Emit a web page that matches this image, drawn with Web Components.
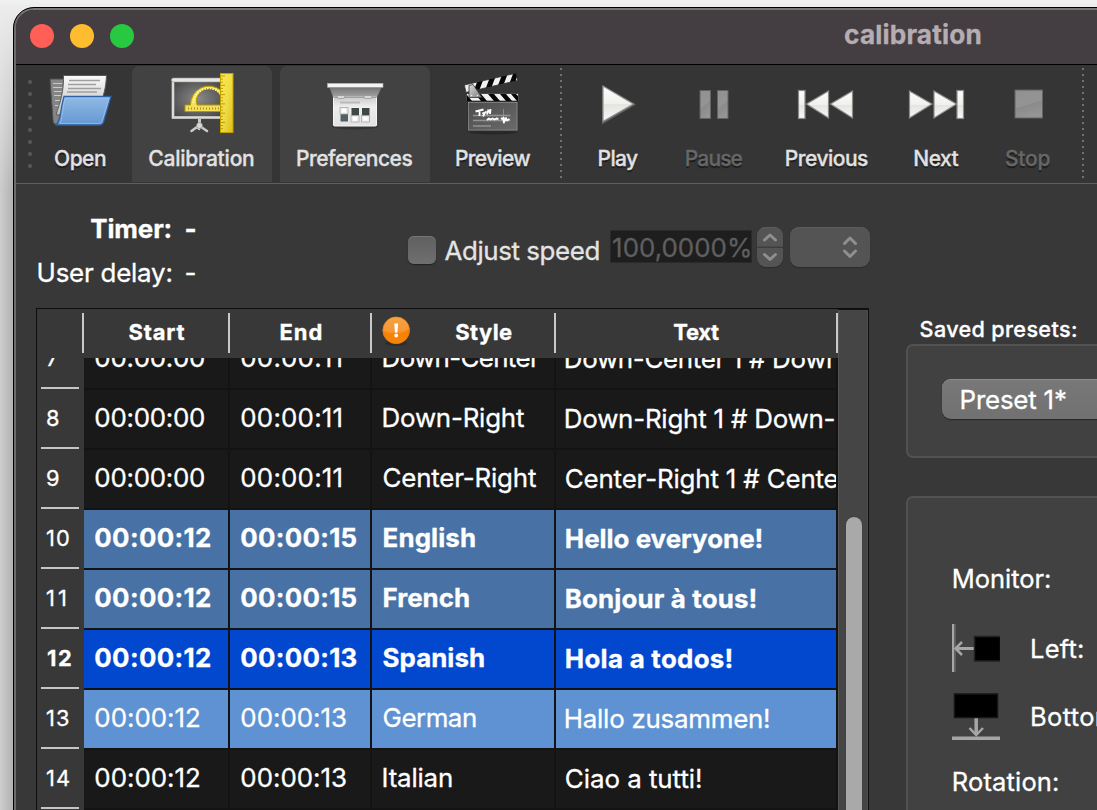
<!DOCTYPE html>
<html lang="en">
<head>
<meta charset="utf-8">
<title>calibration</title>
<style>
html,body{margin:0;height:810px;width:1097px;overflow:hidden;background:#ccc}
body{font-family:Inter,"Liberation Sans",sans-serif;color:#fff}
</style>
</head>
<body>
<app-desktop>
  <app-window heading="calibration">
    <tool-bar slot="toolbar"></tool-bar>
    <main-pane slot="main"></main-pane>
    <preset-pane slot="side"></preset-pane>
  </app-window>
</app-desktop>
<script>
const define = (name, render) => customElements.define(name, class extends HTMLElement {
  connectedCallback() {
    if (this.shadowRoot) return;
    this.attachShadow({mode: 'open'}).innerHTML = render(this);
  }
});

/* Single line of text: b = baseline offset, w = inked width, s = font size, wt = weight, x = left offset */
const ctx = document.createElement('canvas').getContext('2d');
define('ui-label', el => {
  const g = (n, d) => parseFloat(el.getAttribute(n) ?? d);
  const s = g('s', 25.9), wt = g('wt', 400), b = g('b', 20), w = g('w', 0), x = g('x', 0);
  const t = el.textContent;
  ctx.font = `${wt} ${s}px Inter, "Liberation Sans", sans-serif`;
  const m = ctx.measureText(t);
  const ink = m.actualBoundingBoxRight + m.actualBoundingBoxLeft;
  const ls = w && t.length > 1 ? (w - 0.7 - ink) / (t.length - 1) : 0;
  const off = x + 0.6 + m.actualBoundingBoxLeft;
  return `<style>:host{display:block;line-height:0;white-space:pre;font-size:${s}px;font-weight:${wt};height:${b}px;-webkit-text-stroke:.3px currentColor}
  i{display:inline-block;width:0;height:${b}px}
  span{letter-spacing:${ls.toFixed(3)}px;margin-left:${off.toFixed(2)}px}</style><i></i><span><slot></slot></span>`;
});

define('app-desktop', () => `<style>
:host{display:flex;width:1097px;height:810px;box-sizing:border-box;padding:7px 0 0 13px;overflow:hidden;
background:linear-gradient(180deg,#f1f1f1 0,#ececec 7px,rgba(236,236,236,0) 190px),linear-gradient(90deg,#cdcdcd 0,#b2b2b2 13px)}
</style><slot></slot>`);

define('app-window', el => `<style>
:host{display:flex;flex:none;width:1120px;height:830px;box-sizing:border-box;border:1px solid #000;border-radius:21px 0 0 0;background:#383838;overflow:hidden}
.in{flex:1;border:2px solid #6c6c6c;border-top-color:#777;border-radius:20px 0 0 0;overflow:hidden;display:flex;flex-direction:column}
header{height:54px;flex:none;background:#443d41;border-bottom:1px solid #000;display:flex;color:#b6adb2}
.l{width:24px;height:24px;border-radius:50%;margin:14px 16px 0 0}
.l:first-child{margin-left:14px}
section{display:flex;flex:1}
</style><div class="in"><header><div class="l" style="background:#ff5f57"></div><div class="l" style="background:#febc2e"></div><div class="l" style="background:#28c840"></div>
<ui-label x="694.500" w="136" b="34" s="26.200" wt="700">${el.getAttribute('heading')}</ui-label></header>
<slot name="toolbar"></slot><section><slot name="main"></slot><slot name="side"></slot></section></div>`);

define('tool-button', el => {
  const a = n => el.getAttribute(n);
  return `<style>:host{display:block;flex:none;height:116px;margin-top:1px;color:#e2e2e2;text-shadow:0 2px 1px #1b1b1b}
  :host([checked]){background:#424242;border-radius:7px 7px 0 0;text-shadow:none}
  :host([disabled]){color:#676767}
  .ic{display:flex;justify-content:center;height:64px;padding-top:6px}</style>
  <div class="ic"><slot></slot></div><ui-label x="${a('lx')}" w="${a('lw')}" b="30" s="21" wt="500">${a('label')}</ui-label>`;
});

const OPEN = `
<path d="M50 79H64L63 124H55Q53 124 53 120Z" fill="#858585" stroke="#4f4f4f"/>
<path d="M53 83.500h9M53 87.500h9M54 91.500h8M54 95.500h8M55 100.500h7M55 105.500h7" stroke="#c9c9c9"/>
<path d="M64 75.500H106.500C106 86 104 98 99 104H65L60 115H56.500C56 111 64 98 63.500 75.500Z" fill="url(#pp)" stroke="#595959"/>
<path d="M69 80.500h31M68 84.500h28M68 88.500h33M67 92h30" stroke="#a0a0a0" stroke-width="1.300"/>
<path d="M64 96.500H111L103.500 122Q102.500 125 99 125H55.500C61 122 60 110 64 96.500Z" fill="url(#bl)" stroke="#2d62a6" stroke-width="1.300"/>
<path d="M65.500 98H109L102 121.500Q101.500 123.500 99 123.500H60C63 117 62 108 65.500 98Z" fill="none" stroke="#aaccf0" stroke-opacity=".55"/>`;
const teeth = Array.from({length: 18}, (_, i) => `M221 ${76 + i * 3.1}h${i % 3 ? 2 : 4}`).join('');
const CALIB = `
<rect x="173" y="80" width="50" height="37.500" fill="url(#scr)" stroke="#dadbd7" stroke-width="2.600"/>
<rect x="171.500" y="78" width="52" height="4" rx="2" fill="#e6e7e3" stroke="#93948f" stroke-width=".6"/>
<path d="M199.500 119V127" stroke="#c9cac6" stroke-width="3"/><path d="M199 125.500L191.500 131M199 125.500L207 131M199 125.500V129" stroke="#c9cac6" stroke-width="2.600" stroke-linecap="round"/>
<circle cx="199.500" cy="125.500" r="3" fill="#d7d8d4" stroke="#777" stroke-width=".5"/>
<path d="M185 105H190.500A18.500 18.500 0 0 1 221 90.500V97A11 11 0 0 0 197 105H221V111.500H185Z" fill="#f3df58" stroke="#b79600"/>
<path d="M193.500 103A15.500 15.500 0 0 1 221 94" fill="none" stroke="#fff8b0" stroke-width="2" stroke-dasharray="1.500 1.200"/>
<path d="M188 108.500H220" stroke="#a98f1a" stroke-width="2" stroke-dasharray="1 2"/>
<rect x="220.500" y="73.500" width="12.500" height="59" fill="url(#yl)" stroke="#c2a000"/>
<path d="${teeth}" stroke="#a78a00" stroke-width=".8"/>`;
const PREF = `
<ellipse cx="355" cy="126.500" rx="23" ry="3" fill="#2b2b2b" opacity=".6"/>
<path d="M330 88H381L376.500 98H333.500Z" fill="url(#hd)" stroke="#7a7a7a" stroke-width=".6"/>
<rect x="333.500" y="96.500" width="43" height="29.500" rx="1" fill="url(#wb)" stroke="#f6f6f6"/>
<path d="M333.500 97H376.500" stroke="#777"/>
<rect x="337" y="95.500" width="8" height="3" rx="1.500" fill="#d8d8d8" stroke="#888" stroke-width=".6"/><rect x="364" y="95.500" width="8" height="3" rx="1.500" fill="#d8d8d8" stroke="#888" stroke-width=".6"/>
<rect x="327.500" y="83.300" width="55.500" height="4" fill="#f5f5f5" stroke="#aaa" stroke-width=".6"/>
<path d="M340 102.600H360" stroke="#b9b9b9" stroke-width="2"/>
<g fill="#526066"><rect x="340.500" y="108" width="7.500" height="13.500"/></g><g fill="#3f4845"><rect x="351.500" y="108" width="7.500" height="13.500"/><rect x="362" y="108" width="7.500" height="13.500"/></g>
<g fill="#eee" stroke="#aaa" stroke-width=".8"><rect x="340" y="107.500" width="8" height="6.500"/><rect x="351" y="115.500" width="8" height="6.500"/><rect x="361.500" y="115.500" width="8" height="6.500"/></g>
<g fill="#fff"><rect x="342" y="109" width="4" height="3.500"/><rect x="353" y="117" width="4" height="3.500"/><rect x="363.500" y="117" width="4" height="3.500"/></g>`;
const CLAP = `
<ellipse cx="493" cy="132" rx="24" ry="2.500" fill="#222" opacity=".7"/>
<g transform="rotate(-13 465 88)"><rect x="465" y="85" width="53" height="7.500" fill="#f1f1ef" stroke="#2a2a2a" stroke-width=".7"/>
<path d="M473 92.500l5-7.500h6l-5 7.500zM485.500 92.500l5-7.500h6l-5 7.500zM498 92.500l5-7.500h6l-5 7.500zM510 92.500l5-7.500h3v4l-2 3.500z" fill="#080808"/></g>
<rect x="467.500" y="101.500" width="50.500" height="29.500" fill="url(#bd)" stroke="#2e2e2e"/><rect x="468.500" y="102.500" width="48.500" height="27.500" fill="none" stroke="#8d8d8d" stroke-width=".7"/>
<rect x="466.500" y="93.500" width="52" height="7.500" fill="#f1f1ef" stroke="#2a2a2a" stroke-width=".7"/>
<path d="M472 101l-5-6v6zM475 94h6l6 7h-6zM488 94h6l6 7h-6zM500 94h6l6 7h-6zM511 94h5l2 2v5h-1z" fill="#080808"/>
<path d="M469 85.500L473 84.500L482 97.500H469Z" fill="url(#hg)" stroke="#333" stroke-width=".8"/>
<circle cx="471.500" cy="95.500" r=".8" fill="#eee"/><circle cx="477.500" cy="95.500" r=".8" fill="#eee"/>
<path d="M473 115.500H510.500M473 120.500H510.500M473 126H491" stroke="#929292" stroke-width="1.300"/>
<path d="M475.500 111.500l8-2M479.500 110.500v5.500M482.500 112.500l1.500 1.500 2-2.500M484.500 113.500l-1.500 3M488.500 109.500l-1.500 5M486.500 112l3-.5M490.500 109l-.5 5M487 120l2-1.500 1.500 1 2-1 2 1 2-1 2 .5M501 118l2 1.500 .5-2 .3 5 2.200-4.500 1 2.500 2.500-1.500" fill="none" stroke="#fff" stroke-width="1.900" stroke-linejoin="round"/>
<path d="M503.500 109v8" stroke="#999" stroke-width=".7"/>`;
const W = 'fill="url(#wh)" stroke="#8b8b88" stroke-width="1.200"';
const G = 'fill="url(#gy)" stroke="#636363"';
const defs = `<defs>
<linearGradient id="pp" x2="0" y2="1"><stop stop-color="#fafafa"/><stop offset="1" stop-color="#bdbdbd"/></linearGradient>
<linearGradient id="bl" x2="0" y2="1"><stop stop-color="#91b9e6"/><stop offset="1" stop-color="#6698d1"/></linearGradient>
<radialGradient id="scr" r=".75"><stop stop-color="#8a8a8a"/><stop offset="1" stop-color="#3a3a3a"/></radialGradient>
<linearGradient id="yl" x2="1" y2="1"><stop stop-color="#ffe84a"/><stop offset=".5" stop-color="#f0dc48"/><stop offset="1" stop-color="#dcbf16"/></linearGradient>
<linearGradient id="hd" x2="0" y2="1"><stop stop-color="#777"/><stop offset="1" stop-color="#a8a8a8"/></linearGradient>
<linearGradient id="wb" x2="0" y2="1"><stop stop-color="#c9c9c9"/><stop offset=".35" stop-color="#eee"/><stop offset="1" stop-color="#e2e2e2"/></linearGradient>
<linearGradient id="bd" x2="1" y2="1"><stop stop-color="#4b4b4b"/><stop offset="1" stop-color="#6b6b6b"/></linearGradient>
<linearGradient id="hg" x2="1" y2="1"><stop stop-color="#ddd"/><stop offset="1" stop-color="#777"/></linearGradient>
<linearGradient id="wh" x2="0" y2="1"><stop stop-color="#fdfdfc"/><stop offset=".5" stop-color="#f0f0ee"/><stop offset=".52" stop-color="#e4e4e1"/><stop offset="1" stop-color="#f8f8f6"/></linearGradient>
<linearGradient id="gy" x2=".3" y2="1"><stop stop-color="#919191"/><stop offset=".6" stop-color="#949494"/><stop offset=".62" stop-color="#8a8a8a"/><stop offset="1" stop-color="#959595"/></linearGradient></defs>`;
/* [label, gap before, width, icon centre, label offset, label width, state, drawing] */
const TOOLS = [
 ['Open',0,72,80,10.500,51.500,'',OPEN],
 ['Calibration',16,140,202,16.700,105.500,'checked',CALIB],
 ['Preferences',8,150,355,16.500,116,'checked',PREF],
 ['Preview',8,108,492,17.300,75,'',CLAP],
 0,
 ['Play',19,72,617,17,40,'',`<path d="M602 85.500L636 104.500L602 124.500Z" fill="#5c5c5c"/><path d="M603 86L633.500 104L603 121.500Z" ${W}/>`],
 ['Pause',24,72,713,8.200,57.500,'disabled',`<rect x="700" y="90.500" width="10.500" height="28" ${G}/><rect x="717.500" y="90.500" width="10.500" height="28" ${G}/>`],
 ['Previous',27,100,826,9.200,83,'',`<rect x="798.500" y="90.500" width="6.500" height="28" ${W}/><path d="M828.500 91V118L806.500 104ZM852.500 91V118L830.500 104Z" ${W}/>`],
 ['Next',24,72,936,13.700,45,'',`<path d="M909.500 91V118L932 104ZM934 91V118L956.500 104Z" ${W}/><rect x="957" y="90.500" width="6.500" height="28" ${W}/>`],
 ['Stop',20,72,1028,13.500,44,'disabled',`<rect x="1015" y="90" width="27.500" height="28" ${G}/>`],
 1];
define('tool-bar', () => `<style>
:host{display:flex;flex:none;height:118px;background:#353535;border-bottom:1px solid #606060}
.grip{width:28px;flex:none;height:96px;margin-top:10px;background:radial-gradient(circle at 14px 7px,#555 1.700px,transparent 2.300px) 0 0/28px 12px}
.sep{flex:none;width:2px;height:112px;margin:3px 0 0 14px;background:repeating-linear-gradient(#707070 0 2px,transparent 2px 6px)}
.sep.e{margin-left:18px}
svg{display:block;overflow:visible}
</style><div class="grip"></div>` + TOOLS.map(t => Array.isArray(t)
 ? `<tool-button style="width:${t[2]}px;margin-left:${t[1]}px" label="${t[0]}" lx="${t[4]}" lw="${t[5]}" ${t[6]}><svg width="64" height="64" viewBox="${t[3]-32} 72 64 64" fill="none">${defs}${t[7]}</svg></tool-button>`
 : `<div class="sep ${t ? 'e' : ''}"></div>`).join(''));

define('speed-controls', () => `<style>
:host{display:flex;align-items:flex-start}
.cb{width:28px;height:28px;margin-top:52px;border-radius:6px;background:linear-gradient(#606060,#6f6f6f);box-shadow:0 1px 1px #222,inset 0 1px 0 #777}
.f{width:140px;height:31px;border:1px solid #2a2a2a;background:#1e1e1e;margin:46px 0 0 10px;color:#5f5f5f}
.st,.co{height:40px;margin-top:43px;border-radius:9px;background:#545454;box-shadow:0 1px 1px #2b2b2b,inset 0 1px 0 #5c5c5c}
.st{width:26px;margin-left:5px}.co{width:80px;margin-left:7px}svg{display:block}
</style><div class="cb"></div><div style="width:164px;color:#e4e4e4"><ui-label x="8" w="154.500" b="75.500">Adjust speed</ui-label></div>
<div class="f"><ui-label x="1.500" w="137.500" b="26">100,0000%</ui-label></div>
<div class="st"><svg width="26" height="40" fill="none" stroke="#8f8f8f" stroke-width="3" stroke-linecap="round" stroke-linejoin="round"><path d="M0 20.200H26" stroke="#3e3e3e" stroke-width="1.500"/><path d="M7.500 13L13 8L18.500 13M7.500 27.500L13 32.500L18.500 27.500"/></svg></div>
<div class="co"><svg width="80" height="40" fill="none" stroke="#8f8f8f" stroke-width="3" stroke-linecap="round" stroke-linejoin="round"><path d="M54.500 16.500L60 11L65.500 16.500M54.500 24L60 29.500L65.500 24"/></svg></div>`);

define('main-pane', () => `<style>
:host{display:block;flex:none;width:853px;margin-left:20px}
.top{display:flex;height:124px}.info{width:372px}
.r{display:flex}.r>:first-child{width:149px}
</style><div class="top"><div class="info">
<div class="r"><ui-label x="53.700" w="81" b="54" wt="700">Timer:</ui-label><ui-label w="10" b="54" wt="700">-</ui-label></div>
<div class="r"><ui-label x="2" w="133.500" b="43.700">User delay:</ui-label><ui-label w="10" b="43.700">-</ui-label></div>
</div><speed-controls></speed-controls></div><subtitle-table></subtitle-table>`);

/* number, number width, class, then text/width pairs */
const ROWS = [
 ['7',12,'','00:00:00',109.500,'00:00:11',101,'Down-Center',157,'Down-Center 1 # Down',275],
 ['8',12,'','00:00:00',109.500,'00:00:11',101,'Down-Right',141,'Down-Right 1 # Down-',269.500],
 ['9',12,'','00:00:00',109.500,'00:00:11',101,'Center-Right',153,'Center-Right 1 # Cente',272.500],
 ['10',22.500,'m','00:00:12',115.500,'00:00:15',116,'English',92,'Hello everyone!',196.500],
 ['11',18.500,'m','00:00:12',115.500,'00:00:15',116,'French',86,'Bonjour à tous!',190.500],
 ['12',24.500,'s','00:00:12',115.500,'00:00:13',116,'Spanish',101,'Hola a todos!',166.500],
 ['13',22.500,'h','00:00:12',104.500,'00:00:13',105.500,'German',93,'Hallo zusammen!',204],
 ['14',22.500,'','00:00:12',104.500,'00:00:13',105.500,'Italian',69,'Ciao a tutti!',136]];
define('table-row', el => {
  const r = ROWS[el.getAttribute('i')], bold = r[2] === 'm' || r[2] === 's' ? 700 : 400;
  const c = (k, x, b) => `<div><ui-label x="${x}" w="${r[k+1]}" b="${b}" wt="${bold}">${r[k]}</ui-label></div>`;
  return `<style>:host{display:grid;grid-template-columns:45px 144px 140px 182px 280px;column-gap:2px;height:60px;flex:none}
  div{height:58px;margin-bottom:2px;overflow:hidden;background:#191919}
  .n{height:60px;margin:0 -2px 0 0;box-sizing:border-box;position:relative;background:#383838}
  .n::after{content:"";position:absolute;left:4px;width:38px;height:2px;bottom:1px;background:#c6c6c6}
  .m div:not(.n){background:#4872a6}
  section{display:contents}
  .s div:not(.n){background:#0148cf}.h div:not(.n){background:#5e92d3}</style>
  <section class="${r[2]}"><div class="n"><ui-label x="9.500" w="${r[1]}" b="36" s="21.800" wt="${r[2] === 's' ? 700 : 400}">${r[0]}</ui-label></div>${c(3,10.700,37)}${c(5,10.700,37)}${c(7,11,37)}${c(9,9.200,38)}</section>`;
});
define('subtitle-table', () => `<style>
:host{display:flex;width:831px;height:510px;border:1px solid #0d0d0d;background:#131313;overflow:hidden}
.t{width:801px;display:flex;flex-direction:column}
.h{display:grid;grid-template-columns:45px 146px 142px 184px 282px 2px;height:49px;flex:none;background:#383838}
.h div{border-left:2px solid #c8c8c8;height:40px;margin-top:4px;display:flex}
.h div:first-child{border:0}
.b{flex:1;overflow:hidden;display:flex;flex-direction:column}
.b table-row:first-child{margin-top:-28px}
.sb{width:28px;border-left:1px solid #555;border-right:1px solid #4e4e4e;background:#454545;margin-top:1px;display:flex}
.sb div{width:16px;height:500px;border-radius:8px 8px 0 0;background:#a9a9a9;margin:207px 0 0 7px;box-shadow:0 0 1px #222}
</style><div class="t"><div class="h"><div></div>
<div><ui-label x="44" w="56.500" b="27" s="22" wt="700">Start</ui-label></div>
<div><ui-label x="50" w="41.500" b="27" s="22" wt="700">End</ui-label></div>
<div><svg width="32" height="34" style="margin:2px 0 0 9px;flex:none"><defs><linearGradient id="o" x2="0" y2="1"><stop stop-color="#f6a240"/><stop offset="1" stop-color="#f79434"/></linearGradient></defs><ellipse cx="15" cy="28" rx="11" ry="3" fill="#222" opacity=".5"/><circle cx="15.200" cy="15.300" r="13.300" fill="#f78306" stroke="#e07f16"/><path d="M2.500 16A12.700 12.700 0 0 1 28 14Q22 18 15 18Q8 18.500 2.500 16Z" fill="url(#o)"/><path d="M13.200 8.500h4l-.8 9h-2.400z" fill="#fff"/><circle cx="15.200" cy="20.500" r="1.900" fill="#fff"/></svg><ui-label x="41.700" w="57.500" b="27" s="22" wt="700">Style</ui-label></div>
<div><ui-label x="116.700" w="46.500" b="27" s="22" wt="700">Text</ui-label></div><div></div></div>
<div class="b">${ROWS.map((_, i) => `<table-row i="${i}"></table-row>`).join('')}</div></div><div class="sb"><div></div></div>`);

define('group-box', () => `<style>:host{display:block;box-sizing:border-box;border:2px solid #525252;border-radius:7px;background:#414141;overflow:hidden}</style><slot></slot>`);
define('preset-pane', () => `<style>
:host{display:block;flex:none;width:230px;margin-left:17px}
.btn{margin:33px 0 0 34px;width:240px;height:40px;border-radius:9px;background:linear-gradient(#787878,#717171);box-shadow:0 1px 1px #262626,inset 0 1px 0 #8d8d8d}
.row{display:flex}svg{flex:none}
</style>
<ui-label x="14" w="156" b="152.500" s="21.600" wt="500">Saved presets:</ui-label>
<group-box style="height:114px;margin-top:7.500px"><div class="btn"><ui-label x="19" w="105" b="29.500">Preset 1*</ui-label></div></group-box>
<group-box style="height:340px;margin-top:38px">
<ui-label x="45.200" w="97" b="89.500" s="25.500">Monitor:</ui-label>
<div class="row" style="margin-top:36.500px;height:48px"><svg width="48" height="48" style="margin-left:44px"><rect width="2.300" height="48" fill="#a6a6a6"/><rect x="2.300" width="1.500" height="48" fill="#666"/><path d="M3 24.500H22" stroke="#a6a6a6" stroke-width="3"/><path d="M10 18L3.500 24.500L10 31" fill="none" stroke="#a6a6a6" stroke-width="2.500"/><rect x="22.500" y="12.500" width="26" height="24.500" fill="#000" stroke="#222" stroke-width="1.500"/></svg><ui-label x="31.500" w="51.500" b="34" s="25.500">Left:</ui-label></div>
<div class="row" style="margin-top:20px;height:48px"><svg width="48" height="48" style="margin-left:44px"><path d="M24.200 25V43" stroke="#a6a6a6" stroke-width="3.500"/><path d="M17.500 36L24.200 43L31 36" fill="none" stroke="#a6a6a6" stroke-width="2.500"/><rect y="44.500" width="48" height="3.500" fill="#a6a6a6"/><rect x="2.500" y="2" width="43" height="23.500" fill="#000" stroke="#151515" stroke-width="1.500"/></svg><ui-label x="31.500" w="92" b="34" s="25.500">Bottom:</ui-label></div>
<ui-label x="45.200" w="105" b="50.700" s="25.500">Rotation:</ui-label>
</group-box>`);
</script>
</body>
</html>
